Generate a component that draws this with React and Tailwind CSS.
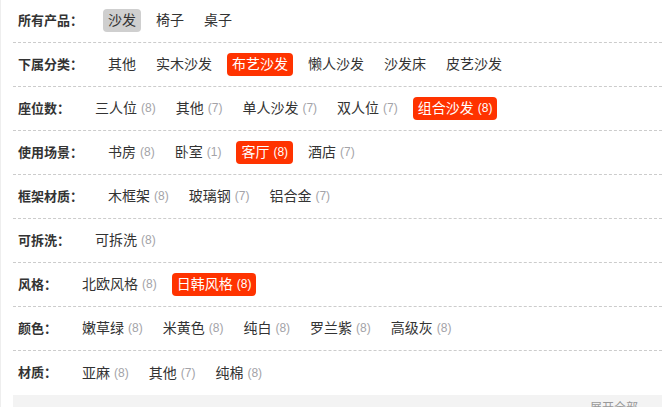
import React from 'react';

const filters = [
  { label: '所有产品：', items: [{ name: '沙发', state: 'gray' }, { name: '椅子' }, { name: '桌子' }] },
  {
    label: '下属分类：',
    items: [{ name: '其他' }, { name: '实木沙发' }, { name: '布艺沙发', state: 'red' }, { name: '懒人沙发' }, { name: '沙发床' }, { name: '皮艺沙发' }],
  },
  {
    label: '座位数：',
    items: [
      { name: '三人位', count: 8 },
      { name: '其他', count: 7 },
      { name: '单人沙发', count: 7 },
      { name: '双人位', count: 7 },
      { name: '组合沙发', count: 8, state: 'red' },
    ],
  },
  {
    label: '使用场景：',
    items: [
      { name: '书房', count: 8 },
      { name: '卧室', count: 1 },
      { name: '客厅', count: 8, state: 'red' },
      { name: '酒店', count: 7 },
    ],
  },
  {
    label: '框架材质：',
    items: [
      { name: '木框架', count: 8 },
      { name: '玻璃钢', count: 7 },
      { name: '铝合金', count: 7 },
    ],
  },
  { label: '可拆洗：', items: [{ name: '可拆洗', count: 8 }] },
  {
    label: '风格：',
    items: [
      { name: '北欧风格', count: 8 },
      { name: '日韩风格', count: 8, state: 'red' },
    ],
  },
  {
    label: '颜色：',
    items: [
      { name: '嫩草绿', count: 8 },
      { name: '米黄色', count: 8 },
      { name: '纯白', count: 8 },
      { name: '罗兰紫', count: 8 },
      { name: '高级灰', count: 8 },
    ],
  },
  {
    label: '材质：',
    items: [
      { name: '亚麻', count: 8 },
      { name: '其他', count: 7 },
      { name: '纯棉', count: 8 },
    ],
  },
];

function Chip({ item }) {
  const tone =
    item.state === 'red'
      ? 'bg-[#ff3300] text-white'
      : item.state === 'gray'
      ? 'bg-[#cfcfcf] text-[#333]'
      : 'text-[#333]';
  return (
    <span className={`mr-[10px] flex h-[23px] items-center rounded-[4px] px-[5px] text-[14px] leading-[23px] ${tone}`}>
      {item.name}
      {item.count !== undefined && (
        <span className={`ml-[4px] text-[12px] ${item.state === 'red' ? 'text-white' : 'text-[#a3a3a8]'}`}>
          ({item.count})
        </span>
      )}
    </span>
  );
}

export default function App() {
  return (
    <div
      className="min-h-[407px] w-[662px] overflow-hidden border-l border-[#eeeeee] bg-white pl-[12px]"
      style={{ fontFamily: '"Liberation Sans", "Noto Sans CJK SC", sans-serif' }}
    >
      <div className="-mt-px">
        {filters.map((row, i) => (
          <div
            key={row.label}
            className={`flex h-[44px] items-center ${i < filters.length - 1 ? 'border-b border-dashed border-[#cccccc]' : ''}`}
          >
            <span className="mr-[20px] pl-[5px] text-[13px] font-bold text-[#333]">{row.label}</span>
            {row.items.map((item) => (
              <Chip key={item.name} item={item} />
            ))}
          </div>
        ))}
      </div>
      <div className="flex h-[26px] items-center justify-end bg-[#f3f3f3] pr-[24px] text-[12px] text-[#999]">
        展开全部
      </div>
    </div>
  );
}
